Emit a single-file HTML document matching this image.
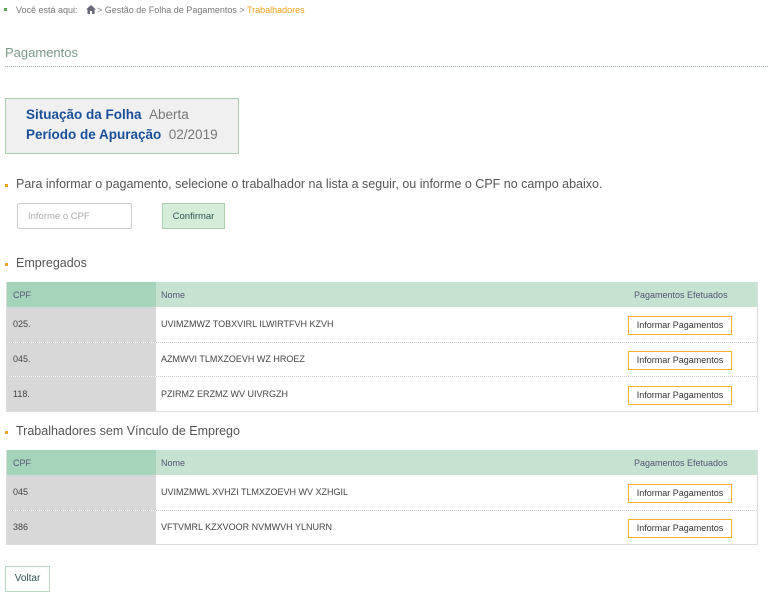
<!DOCTYPE html>
<html><head><meta charset="utf-8"><style>
*{margin:0;padding:0;box-sizing:border-box}
body{width:768px;height:600px;background:#fff;font-family:"Liberation Sans",sans-serif;position:relative;overflow:hidden;color:#555}
.a{position:absolute;white-space:nowrap}
.bul{position:absolute;width:3px;height:3px;background:#f0a020}
.tbl{position:absolute;left:6px;width:752px;border:1px solid #ddd;border-top:none}
.hd{height:25px;background:#c6e2d0;position:relative;font-size:9px;color:#557}
.hd .c1{position:absolute;left:0;top:0;width:149px;height:25px;background:#a6d4ba}
.row{height:34.5px;position:relative;border-top:1px dotted #ccc;font-size:9px;color:#444}
.row .c1{position:absolute;left:0;top:0;width:149px;height:100%;background:#d8d8d8}
.t{position:absolute;top:50%;transform:translateY(-50%)}
.btn{position:absolute;left:621px;top:50%;margin-top:-8px;width:104px;height:19px;border:1.5px solid #f5b030;font-size:9px;color:#333;text-align:center;line-height:16px}
</style></head><body>
<div class="a" style="left:4px;top:8px;width:3px;height:3px;background:#5a5"></div>
<div class="a" style="left:16px;top:5px;font-size:9px;color:#777">Você está aqui:</div>
<svg class="a" style="left:86px;top:5px" width="10" height="9" viewBox="0 0 10 9"><path d="M5 0L0 4.5h1.5V9h2.5V6h2v3h2.5V4.5H10z" fill="#667"/></svg>
<div class="a" style="left:97px;top:5px;font-size:9px;color:#777">&gt; Gestão de Folha de Pagamentos &gt; <span style="color:#f0a020">Trabalhadores</span></div>
<div class="a" style="left:5px;top:45px;font-size:13px;color:#7a9a88">Pagamentos</div>
<div class="a" style="left:5px;top:66px;width:763px;border-top:1px dotted #9ab"></div>
<div class="a" style="left:5px;top:98px;width:234px;height:56px;border:1.5px solid #a8d0b0;background:#f0f0f0"></div>
<div class="a" style="left:26px;top:107px;font-size:13.5px;color:#1a4f9a;font-weight:bold">Situação da Folha <span style="font-weight:normal;color:#777">&nbsp;Aberta</span></div>
<div class="a" style="left:26px;top:127px;font-size:13.5px;color:#1a4f9a;font-weight:bold">Período de Apuração <span style="font-weight:normal;color:#777">&nbsp;02/2019</span></div>
<div class="bul" style="left:5px;top:184px"></div>
<div class="a" style="left:16px;top:177px;font-size:12.5px;color:#555">Para informar o pagamento, selecione o trabalhador na lista a seguir, ou informe o CPF no campo abaixo.</div>
<div class="a" style="left:17px;top:203px;width:115px;height:26px;border:1px solid #ccc;border-radius:2px;font-size:9.5px;color:#aaa;padding:7px 10px">Informe o CPF</div>
<div class="a" style="left:162px;top:203px;width:63px;height:26px;border:1px solid #aad0b0;background:#d4ecd8;font-size:9.5px;color:#355;text-align:center;line-height:25px">Confirmar</div>
<div class="bul" style="left:5px;top:263px"></div>
<div class="a" style="left:16px;top:256px;font-size:12.5px;color:#555">Empregados</div>
<div class="tbl" style="top:282px">
<div class="hd"><div class="c1"></div><span class="t" style="left:6px">CPF</span><span class="t" style="left:154px">Nome</span><span class="t" style="left:627px">Pagamentos Efetuados</span></div>
<div class="row" style="border-top:none"><div class="c1"></div><span class="t" style="left:6px">025.</span><span class="t" style="left:154px">UVIMZMWZ TOBXVIRL ILWIRTFVH KZVH</span><div class="btn">Informar Pagamentos</div></div>
<div class="row"><div class="c1"></div><span class="t" style="left:6px">045.</span><span class="t" style="left:154px">AZMWVI TLMXZOEVH WZ HROEZ</span><div class="btn">Informar Pagamentos</div></div>
<div class="row"><div class="c1"></div><span class="t" style="left:6px">118.</span><span class="t" style="left:154px">PZIRMZ ERZMZ WV UIVRGZH</span><div class="btn">Informar Pagamentos</div></div>
</div>
<div class="bul" style="left:5px;top:431px"></div>
<div class="a" style="left:16px;top:424px;font-size:12.5px;color:#555">Trabalhadores sem Vínculo de Emprego</div>
<div class="tbl" style="top:450px">
<div class="hd"><div class="c1"></div><span class="t" style="left:6px">CPF</span><span class="t" style="left:154px">Nome</span><span class="t" style="left:627px">Pagamentos Efetuados</span></div>
<div class="row" style="border-top:none"><div class="c1"></div><span class="t" style="left:6px">045</span><span class="t" style="left:154px">UVIMZMWL XVHZI TLMXZOEVH WV XZHGIL</span><div class="btn">Informar Pagamentos</div></div>
<div class="row"><div class="c1"></div><span class="t" style="left:6px">386</span><span class="t" style="left:154px">VFTVMRL KZXVOOR NVMWVH YLNURN</span><div class="btn">Informar Pagamentos</div></div>
</div>
<div class="a" style="left:5px;top:566px;width:45px;height:26px;border:1.5px solid #b8d8c0;font-size:10px;color:#355;text-align:center;line-height:23px">Voltar</div>
</body></html>
